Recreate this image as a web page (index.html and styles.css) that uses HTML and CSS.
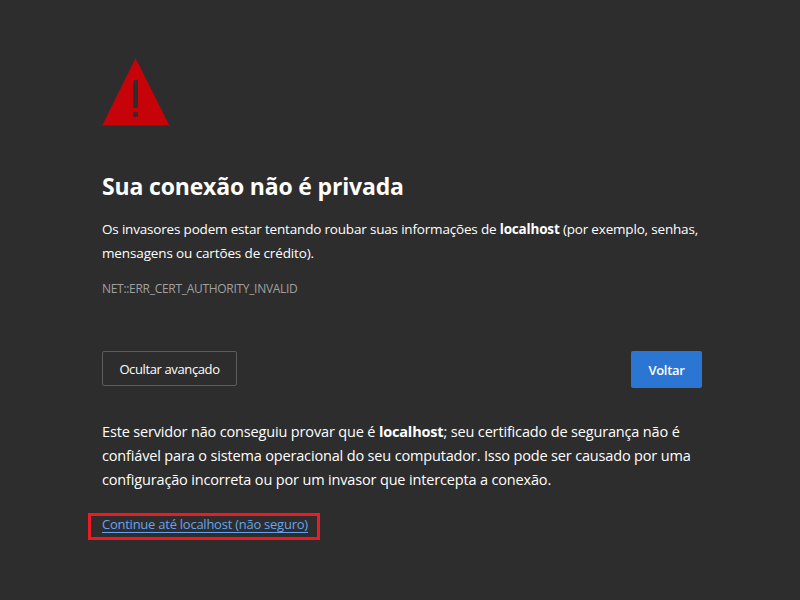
FILE: index.html
```html
<!DOCTYPE html>
<html lang="pt-BR">
<head>
<meta charset="utf-8">
<title>Erro de privacidade</title>
<link rel="stylesheet" href="styles.css">
</head>
<body>
<main class="page">
<svg class="icon" viewBox="0 0 68 68"><path fill="#c60309" fill-rule="evenodd" d="M33.600 .3L67.400 67.400H.2ZM31.300 22.300V49.700H36V22.300ZM31.300 54.200V58.700H36V54.200Z"/></svg>
<h1 class="title">Sua conexão não é privada</h1>
<p class="lead">Os invasores podem estar tentando roubar suas informações de <b>localhost</b> (por exemplo, senhas,<br><span class="lead-end">mensagens ou cartões de crédito).</span></p>
<p class="code">NET::ERR_CERT_AUTHORITY_INVALID</p>
<div class="actions"><button class="secondary">Ocultar avançado</button><button class="primary">Voltar</button></div>
<p class="details">Este servidor não conseguiu provar que é <b>localhost</b>; seu certificado de segurança não é<br>confiável para o sistema operacional do seu computador. Isso pode ser causado por uma<br>configuração incorreta ou por um invasor que intercepta a conexão.</p>
<div class="highlight"><a class="link" href="#">Continue até localhost (não seguro)</a></div>
</main>
</body>
</html>
```
FILE: styles.css
```css
* { box-sizing: border-box; }
body { margin: 0; background: #2d2d2d; color: #fff; font-family: "Open Sans", sans-serif; height: 600px; overflow: hidden; }
.page { width: 600px; margin-left: 102px; padding-top: 58px; white-space: nowrap; }
.icon { display: block; width: 68px; height: 68px; }
.title { margin: 43px 0 0; font-size: 23px; line-height: 34px; font-weight: 700; letter-spacing: -0.17px; }
.lead { margin: 14px 0 0; font-size: 13.5px; line-height: 24px; letter-spacing: -0.183px; }
.lead-end { letter-spacing: -0.13px; }
.code { margin: 12px 0 0; font-size: 12px; line-height: 24px; color: #a0a0a0; letter-spacing: -0.3px; }
.actions { margin-top: 50px; display: flex; justify-content: space-between; align-items: flex-start; }
button { font-family: inherit; font-size: 13px; color: #fff; padding: 0; border-radius: 2px; }
.secondary { width: 135px; height: 35px; background: transparent; border: 1px solid #5d5d5d; letter-spacing: -0.38px; }
.primary { width: 71px; height: 37px; background: #2b75d3; border: 0; font-weight: 600; letter-spacing: -0.3px; }
.details { margin: 32px 0 0; font-size: 14.5px; line-height: 24px; letter-spacing: -0.16px; }
.highlight { margin: 21px 0 0 -14px; width: 232px; height: 27px; border: 3px solid #ed1c24; padding-left: 11px; line-height: 17px; font-size: 13px; }
.link { color: #67a4ee; letter-spacing: -0.25px; text-decoration: none; border-bottom: 1px solid; display: inline-block; height: 17px; }
```
